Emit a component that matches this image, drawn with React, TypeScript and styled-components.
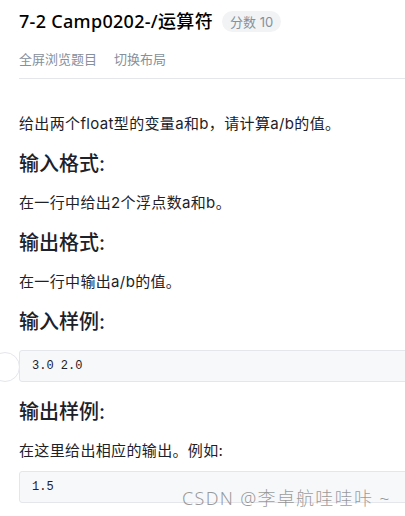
import * as React from 'react';
import styled, { createGlobalStyle } from 'styled-components';

const GlobalStyle = createGlobalStyle`
  html, body {
    margin: 0;
    padding: 0;
    background: #ffffff;
    overflow: hidden;
  }
  body {
    font-family: Inter, "Noto Sans CJK SC", sans-serif;
    color: #1d2129;
  }
`;

const Page = styled.div`
  position: relative;
  width: 405px;
  height: 516px;
  overflow: hidden;
  padding-left: 19px;
  box-sizing: border-box;
`;

const Inner = styled.div`
  width: 420px;
`;

const TitleRow = styled.div`
  display: flex;
  align-items: center;
  gap: 9px;
  padding-top: 9px;
  height: 24px;
`;

const Title = styled.h1`
  margin: 0;
  font-family: "Noto Sans", "Noto Sans CJK SC", sans-serif;
  font-size: 18px;
  line-height: 24px;
  font-weight: 500;
  letter-spacing: 0.3px;
  color: #000000;
  white-space: nowrap;
`;

const ScoreBadge = styled.span`
  display: inline-flex;
  align-items: center;
  height: 21px;
  padding: 0 8px;
  border-radius: 11px;
  background: #f2f3f5;
  color: #86909c;
  font-size: 13px;
  white-space: nowrap;
`;

const ActionBar = styled.div`
  display: flex;
  gap: 17px;
  margin-top: 14px;
  height: 22px;
  align-items: center;
  padding-bottom: 9px;
  border-bottom: 1px solid #e5e6eb;
`;

const ActionLink = styled.span`
  font-size: 13px;
  color: #86909c;
  cursor: pointer;
`;

const Content = styled.div`
  padding-top: 33px;
`;

const Para = styled.p`
  margin: 0;
  font-size: 15px;
  line-height: 24px;
  letter-spacing: 0.35px;
  color: #1d2129;

  & + pre {
    margin-top: 8px;
  }
`;

const Heading = styled.h3`
  margin: 14px 0 13px;
  font-size: 20px;
  line-height: 28px;
  font-weight: 500;
  color: #1d2129;
`;

const CodeBlock = styled.pre`
  position: relative;
  margin: 14px 0 16px;
  height: 32px;
  box-sizing: border-box;
  padding: 0 12px;
  display: flex;
  align-items: center;
  background: #f7f8fa;
  border: 1px solid #e5e6eb;
  border-radius: 3px;
  font-family: "Liberation Mono", "DejaVu Sans Mono", monospace;
  font-size: 12px;
  color: #1d2129;
`;

const SideCircle = styled.span`
  position: absolute;
  left: -30px;
  top: 1px;
  width: 28px;
  height: 28px;
  border-radius: 50%;
  border: 1px solid #e5e6eb;
  background: #ffffff;
`;

const Watermark = styled.div`
  position: absolute;
  left: 182px;
  top: 487px;
  font-family: "Noto Sans", "Noto Sans CJK SC", sans-serif;
  font-size: 18px;
  letter-spacing: 1.3px;
  line-height: 22px;
  font-weight: 300;
  color: rgba(120, 120, 120, 0.75);
  white-space: nowrap;
  pointer-events: none;
`;

export default function App() {
  return (
    <>
      <GlobalStyle />
      <Page>
        <Inner>
          <TitleRow>
            <Title>7-2 Camp0202-/运算符</Title>
            <ScoreBadge>分数 10</ScoreBadge>
          </TitleRow>
          <ActionBar>
            <ActionLink>全屏浏览题目</ActionLink>
            <ActionLink>切换布局</ActionLink>
          </ActionBar>
          <Content>
            <Para>给出两个float型的变量a和b，请计算a/b的值。</Para>
            <Heading>输入格式:</Heading>
            <Para>在一行中给出2个浮点数a和b。</Para>
            <Heading>输出格式:</Heading>
            <Para>在一行中输出a/b的值。</Para>
            <Heading>输入样例:</Heading>
            <CodeBlock>
              <SideCircle />
              3.0 2.0
            </CodeBlock>
            <Heading>输出样例:</Heading>
            <Para>在这里给出相应的输出。例如:</Para>
            <CodeBlock>1.5</CodeBlock>
          </Content>
        </Inner>
        <Watermark>CSDN @李卓航哇哇咔 ~</Watermark>
      </Page>
    </>
  );
}
